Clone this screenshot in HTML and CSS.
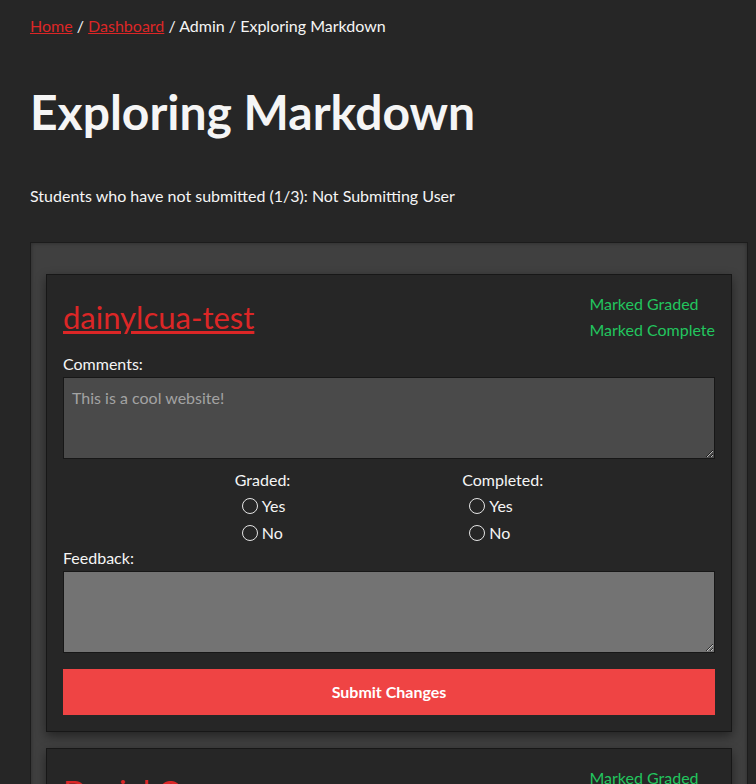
FILE: index.html
```html
<!DOCTYPE html>
<html lang="en">
<head>
<meta charset="utf-8">
<title>Exploring Markdown</title>
<link rel="stylesheet" href="styles.css">
</head>
<body>
<div class="page">
  <nav class="crumbs"><a href="#">Home</a> / <a href="#">Dashboard</a> / Admin / Exploring Markdown</nav>
  <h1 class="title">Exploring Markdown</h1>
  <p class="missing">Students who have not submitted (1/3): Not Submitting User</p>
  <section class="subs">
    <form class="card">
      <div class="card-head">
        <a class="student" href="#">dainylcua-test</a>
        <div class="status">
          <div>Marked Graded</div>
          <div>Marked Complete</div>
        </div>
      </div>
      <label class="lbl">Comments:</label>
      <textarea class="box box-dark" placeholder="This is a cool website!"></textarea>
      <div class="choices">
        <div class="choice">
          <div class="lbl">Graded:</div>
          <label class="opt"><input type="radio" name="g1"> Yes</label>
          <label class="opt"><input type="radio" name="g1"> No</label>
        </div>
        <div class="choice">
          <div class="lbl">Completed:</div>
          <label class="opt"><input type="radio" name="c1"> Yes</label>
          <label class="opt"><input type="radio" name="c1"> No</label>
        </div>
      </div>
      <label class="lbl">Feedback:</label>
      <textarea class="box box-light"></textarea>
      <button type="button" class="submit">Submit Changes</button>
    </form>
    <form class="card">
      <div class="card-head">
        <a class="student" href="#">Daniel Cua</a>
        <div class="status">
          <div>Marked Graded</div>
          <div>Marked Complete</div>
        </div>
      </div>
    </form>
  </section>
</div>
</body>
</html>
```

FILE: styles.css
```css
* { box-sizing: border-box; }
html, body { margin: 0; padding: 0; }
body {
  background: #262626;
  color: #f5f5f5;
  font-family: Lato, "Open Sans", sans-serif;
  font-size: 16px;
  line-height: 24px;
  overflow: hidden;
}
.page {
  padding: 14px 8px 0 30px;
}
a { color: #dc2626; }
.crumbs { line-height: 24px; }
.title {
  margin: 46px 0 0;
  font-size: 48px;
  line-height: 56px;
  font-weight: 700;
}
.missing {
  margin: 44px 0 0;
}
.subs {
  margin-top: 34px;
  background: #404040;
  border: 1px solid #1c1c1c;
  padding: 31px 15px 15px;
  box-shadow: inset 0 0 4px rgba(0,0,0,0.35);
}
.card {
  display: block;
  background: #262626;
  border: 1px solid #171717;
  padding: 16px;
  box-shadow: 0 4px 10px rgba(0,0,0,0.45);
  margin-bottom: 16px;
}
.card-head {
  display: flex;
  justify-content: space-between;
  align-items: center;
  margin-bottom: 9px;
}
.student {
  font-size: 31px;
  line-height: 36px;
}
.status {
  color: #22c55e;
  line-height: 26px;
}
.lbl { display: block; }
.box {
  display: block;
  width: 100%;
  height: 82px;
  border: 1px solid #171717;
  padding: 8px;
  font: inherit;
  color: #f5f5f5;
  resize: vertical;
  margin: 1px 0 0;
}
.box-dark { background: #4a4a4a; }
.box-dark::placeholder { color: #a3a3a3; }
.box-light { background: #737373; }
.choices {
  display: flex;
  justify-content: space-evenly;
  margin-top: 9px;
}
.choice { display: flex; flex-direction: column; }
.opt {
  display: flex;
  align-items: center;
  line-height: 27px;
}
.opt input {
  appearance: none;
  -webkit-appearance: none;
  width: 16px;
  height: 16px;
  margin: 0 4px 0 7px;
  border: 1px solid #e5e5e5;
  border-radius: 50%;
  background: transparent;
}
.submit {
  display: block;
  width: 100%;
  height: 46px;
  margin-top: 16px;
  border: 0;
  background: #ef4444;
  color: #fff;
  font: inherit;
  font-weight: 700;
}
```
